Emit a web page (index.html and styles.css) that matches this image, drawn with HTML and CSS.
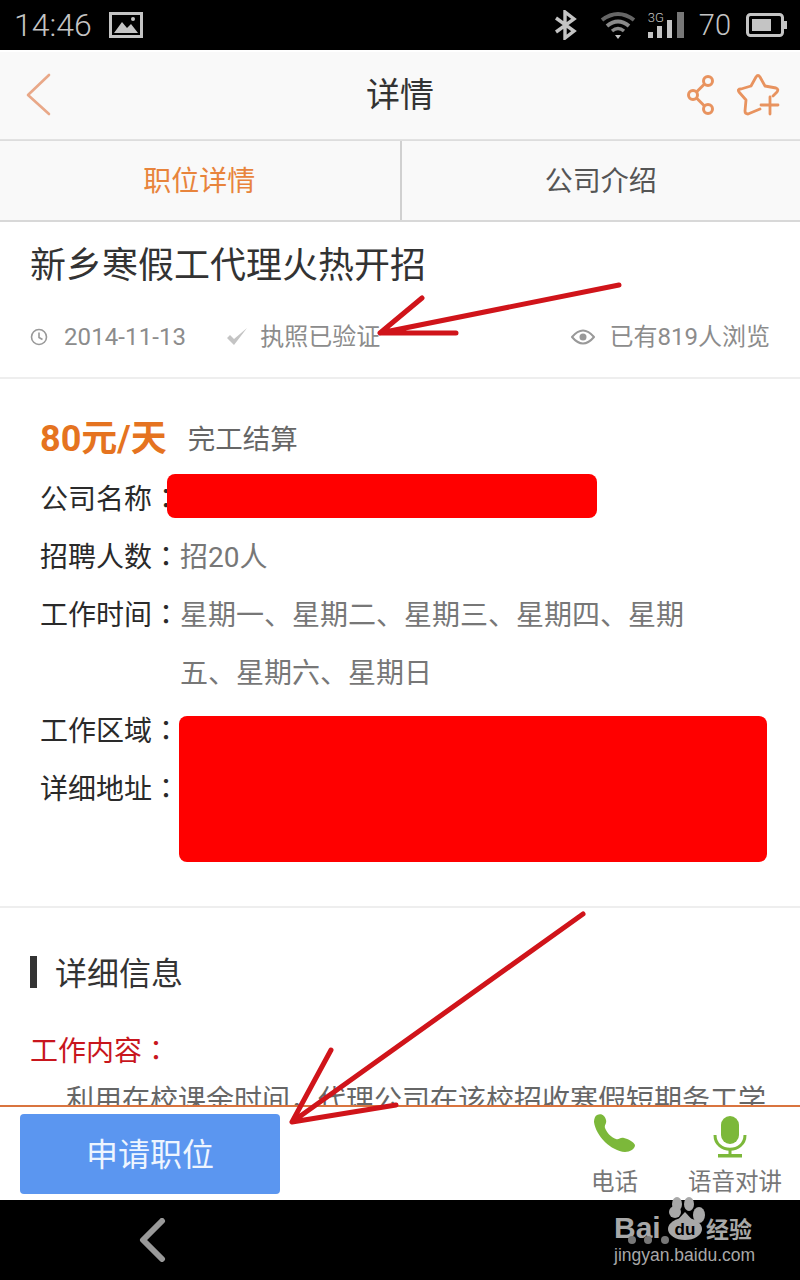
FILE: index.html
```html
<!DOCTYPE html>
<html lang="zh-CN">
<head>
    <meta charset="UTF-8">
    <title>详情</title>
    <link rel="stylesheet" href="styles.css">
</head>
<body>
    <div class="phone">
        <!-- Status bar -->
        <div class="status">
            <div class="status-left">
                <span class="clock">14:46</span>
                <svg width="34" height="26" viewBox="0 0 34 26">
                    <rect x="1.5" y="1.5" width="31" height="23" fill="none" stroke="#c4c4c4" stroke-width="3"/>
                    <path d="M5 21 L13 10 L18 16 L22 12 L29 21 Z" fill="#c4c4c4"/>
                    <circle cx="24" cy="7" r="2" fill="#c4c4c4"/>
                </svg>
            </div>
            <div class="status-right">
                <svg class="st-bt" width="23" height="30" viewBox="0 0 23 30">
                    <path d="M2 8 L20 21 L11 28 L11 2 L20 9 L2 22" fill="none" stroke="#c4c4c4" stroke-width="3.4"/>
                </svg>
                <svg class="st-wifi" width="36" height="28" viewBox="0 0 36 28">
                    <path d="M2 9 Q18 -3 34 9" fill="none" stroke="#666" stroke-width="4"/>
                    <path d="M7 15 Q18 6 29 15" fill="none" stroke="#8a8a8a" stroke-width="4"/>
                    <path d="M12 20 Q18 15 24 20" fill="none" stroke="#8a8a8a" stroke-width="3.5"/>
                    <path d="M15 24 L21 24 L18 28 Z" fill="#c4c4c4"/>
                </svg>
                <div class="st-signal">
                    <span class="st-3g">3G</span>
                    <svg width="38" height="26" viewBox="0 0 38 26">
                        <rect x="0" y="20" width="5" height="6" fill="#c4c4c4"/>
                        <rect x="9" y="14" width="5" height="12" fill="#c4c4c4"/>
                        <rect x="19" y="8" width="5" height="18" fill="#c4c4c4"/>
                        <rect x="29" y="0" width="7" height="26" fill="#777"/>
                    </svg>
                </div>
                <span class="st-level">70</span>
                <svg width="41" height="24" viewBox="0 0 41 24">
                    <rect x="1.5" y="1.5" width="35" height="21" rx="3" fill="none" stroke="#c4c4c4" stroke-width="3"/>
                    <rect x="6" y="6" width="19" height="12" fill="#c4c4c4"/>
                    <rect x="38" y="8" width="3" height="8" fill="#c4c4c4"/>
                </svg>
            </div>
        </div>

        <!-- Title bar -->
        <div class="topbar">
            <svg class="back" width="26" height="44" viewBox="0 0 26 44">
                <path d="M23 2 L2 22 L23 41" fill="none" stroke="#e9a888" stroke-width="2.6" stroke-linecap="round" stroke-linejoin="round"/>
            </svg>
            <div class="topbar-title">详情</div>
            <div class="topbar-actions">
                <svg width="28" height="42" viewBox="0 0 28 42">
                    <g fill="none" stroke="#e8935f" stroke-width="3">
                        <circle cx="21" cy="7" r="4.5"/>
                        <circle cx="6" cy="21" r="4.5"/>
                        <circle cx="21" cy="35" r="4.5"/>
                        <path d="M17.5 10 L9.5 18 M9.5 24 L17.5 32"/>
                    </g>
                </svg>
                <svg width="44" height="42" viewBox="0 0 44 42">
                    <g fill="none" stroke="#e8935f" stroke-width="2.8" stroke-linecap="round" stroke-linejoin="round">
                        <path d="M23 35 L11 40 Q8 40 8 37 L9 26 L2 18 Q0 15 4 15 L14 12 L19 3 Q21 0 23 3 L28 12 L39 14 Q42 15 40 18 L36 22"/>
                        <path d="M33 23 L33 40 M24 31 L41 31"/>
                    </g>
                </svg>
            </div>
        </div>

        <!-- Tabs -->
        <div class="tabs">
            <div class="tab tab-active">职位详情</div>
            <div class="tab">公司介绍</div>
        </div>

        <div class="content">
            <div class="job-head">
                <h1 class="job-title">新乡寒假工代理火热开招</h1>
                <div class="meta">
                    <div class="meta-left">
                        <span class="meta-item meta-time">
                            <svg width="18" height="18" viewBox="0 0 18 18">
                                <circle cx="9" cy="9" r="7.5" fill="none" stroke="#999" stroke-width="1.6"/>
                                <path d="M9 4.5 L9 9.5 L12.5 11.5" fill="none" stroke="#999" stroke-width="1.6"/>
                            </svg>
                            <span class="meta-date">2014-11-13</span>
                        </span>
                        <span class="meta-item">
                            <svg width="22" height="20" viewBox="0 0 22 20">
                                <path d="M1 11 L8 18 L21 1 L8 12 L4 8 Z" fill="#c4c4c4"/>
                            </svg>
                            <span>执照已验证</span>
                        </span>
                    </div>
                    <span class="meta-item meta-views">
                        <svg width="24" height="16" viewBox="0 0 24 16">
                            <path d="M1 8 Q12 -5 23 8 Q12 21 1 8 Z" fill="none" stroke="#999" stroke-width="2"/>
                            <circle cx="12" cy="8" r="3.5" fill="#999"/>
                        </svg>
                        <span>已有819人浏览</span>
                    </span>
                </div>
            </div>

            <div class="job-info">
                <div class="pay">
                    <span class="pay-amount">80元/天</span>
                    <span class="pay-type">完工结算</span>
                </div>
                <div class="row"><span class="row-label">公司名称<span class="colon" lang="zh-TW">：</span></span><span class="row-value"></span></div>
                <div class="row"><span class="row-label">招聘人数<span class="colon" lang="zh-TW">：</span></span><span class="row-value">招20人</span></div>
                <div class="row"><span class="row-label">工作时间<span class="colon" lang="zh-TW">：</span></span><span class="row-value">星期一、星期二、星期三、星期四、星期五、星期六、星期日</span></div>
                <div class="row"><span class="row-label">工作区域<span class="colon" lang="zh-TW">：</span></span><span class="row-value"></span></div>
                <div class="row"><span class="row-label">详细地址<span class="colon" lang="zh-TW">：</span></span><span class="row-value"></span></div>
            </div>

            <div class="details">
                <h2 class="details-title">详细信息</h2>
                <div class="details-sub">工作内容<span class="colon" lang="zh-TW">：</span></div>
                <p class="details-text">利用在校课余时间，代理公司在该校招收寒假短期务工学</p>
            </div>
        </div>

        <!-- Bottom action bar -->
        <div class="actions">
            <button class="apply">申请职位</button>
            <div class="tools">
                <div class="tool tool-phone">
                    <svg width="44" height="38" viewBox="0 0 44 38">
                        <path d="M4 1 C9 -1 12 2 13 6 C14 10 11 11 12 14 C14 19 18 23 23 25 C26 26 27 23 31 24 C35 25 41 28 42 31 C42 35 37 38 32 38 C18 37 3 22 1 8 C1 5 2 2 4 1 Z" fill="#7cb83a"/>
                    </svg>
                    <span>电话</span>
                </div>
                <div class="tool tool-voice">
                    <svg width="34" height="42" viewBox="0 0 34 42">
                        <rect x="8" y="0" width="18" height="28" rx="9" fill="#7cb83a"/>
                        <path d="M2 19 C2 38 32 38 32 19" fill="none" stroke="#7cb83a" stroke-width="3"/>
                        <path d="M17 33 L17 39" stroke="#7cb83a" stroke-width="3"/>
                        <rect x="5" y="38" width="24" height="3.5" fill="#7cb83a"/>
                    </svg>
                    <span>语音对讲</span>
                </div>
            </div>
        </div>

        <!-- Navigation bar -->
        <div class="navbar">
            <svg class="nav-back" width="28" height="44" viewBox="0 0 28 44">
                <path d="M24 3 L5 22 L24 41" fill="none" stroke="#999" stroke-width="6" stroke-linecap="round" stroke-linejoin="round"/>
            </svg>
        </div>

        <!-- Things painted over the screenshot -->
        <div class="redact redact-name"></div>
        <div class="redact redact-area"></div>
        <svg class="scribble" width="800" height="1280" viewBox="0 0 800 1280">
            <g fill="none" stroke="#d0141a" stroke-width="5" stroke-linecap="round" stroke-linejoin="round">
                <path d="M619 285 L380 333 L456 333 M380 333 L422 298"/>
                <path d="M583 914 L292 1122 L396 1105 M292 1122 L331 1050"/>
            </g>
        </svg>
        <div class="watermark">
            <div class="wm-logo">
                <span class="wm-bai">Bai</span>
                <svg class="wm-paw" width="44" height="46" viewBox="0 0 44 46">
                    <g fill="#777">
                        <circle cx="-30" cy="44" r="4"/>
                        <circle cx="-14" cy="44" r="4"/>
                        <circle cx="3" cy="44" r="4"/>
                    </g>
                    <g fill="#a8a8a8">
                        <ellipse cx="15" cy="8" rx="5" ry="7"/>
                        <ellipse cx="27" cy="8" rx="5" ry="7"/>
                        <ellipse cx="13" cy="16" rx="6" ry="6"/>
                        <ellipse cx="37" cy="19" rx="6" ry="8"/>
                        <ellipse cx="23" cy="33" rx="17" ry="11"/>
                        <path d="M23 16 L36 30 L10 30 Z"/>
                    </g>
                    <text x="23" y="39" text-anchor="middle" class="wm-du">du</text>
                </svg>
                <span class="wm-jy">经验</span>
            </div>
            <div class="wm-url">jingyan.baidu.com</div>
        </div>
    </div>
</body>
</html>
```

FILE: styles.css
```css
/* General */
* {
    box-sizing: border-box;
}

body {
    margin: 0;
    background-color: #fff;
    font-family: Roboto, "Noto Sans CJK SC", sans-serif;
    color: #333;
}

.phone {
    position: relative;
    display: flex;
    flex-direction: column;
    width: 800px;
    height: 1280px;
    overflow: hidden;
}

/* Centred full-width colon */
.colon {
    font-family: "Noto Sans CJK TC", sans-serif;
    line-height: 0;
}

/* Status bar */
.status {
    display: flex;
    justify-content: space-between;
    align-items: center;
    height: 50px;
    flex: none;
    padding: 0 13px 0 14px;
    background-color: #000;
    color: #c4c4c4;
    font-weight: 300;
}

.status-left,
.status-right {
    display: flex;
    align-items: center;
}

.clock {
    font-size: 32px;
    line-height: 50px;
    margin-right: 17px;
}

.st-bt {
    margin-right: 23px;
}

.st-wifi {
    margin-right: 12px;
}

.st-signal {
    position: relative;
    margin-right: 13px;
}

.st-signal svg {
    display: block;
}

.st-3g {
    position: absolute;
    left: 0;
    top: -1px;
    font-size: 13px;
    line-height: 14px;
}

.st-level {
    font-size: 29px;
    margin-right: 15px;
}

/* Title bar */
.topbar {
    display: grid;
    grid-template-columns: 1fr auto 1fr;
    align-items: center;
    height: 90px;
    flex: none;
    padding: 0 19px 2px 26px;
    background-color: #f9f9f9;
    border-top: 2px solid #fff;
    border-bottom: 1px solid #e2e2e2;
}

.topbar-title {
    font-size: 34px;
    line-height: 48px;
    margin-left: -7px;
    color: #333;
}

.topbar-actions {
    display: flex;
    justify-content: flex-end;
    gap: 22px;
}

/* Tabs */
.tabs {
    display: flex;
    height: 82px;
    flex: none;
    background-color: #f9f9f9;
    border-top: 1px solid #ddd;
    border-bottom: 2px solid #d8d8d8;
}

.tab {
    display: flex;
    flex: 1;
    align-items: center;
    justify-content: center;
    padding-bottom: 4px;
    font-size: 28px;
    color: #555;
}

.tab + .tab {
    border-left: 2px solid #d0d0d0;
    margin-left: 1px;
}

.tab-active {
    color: #e8843c;
}

/* Page content */
.content {
    flex: 1;
    overflow: hidden;
    background-color: #fff;
}

.job-head {
    height: 157px;
    padding: 0 30px;
    border-bottom: 2px solid #eee;
}

.job-title {
    margin: 0;
    padding-top: 18px;
    font-size: 36px;
    font-weight: 400;
    line-height: 52px;
    color: #333;
}

.meta {
    display: flex;
    justify-content: space-between;
    align-items: center;
    margin-top: 25px;
    font-size: 24px;
    line-height: 40px;
    color: #8c8c8c;
}

.meta-left {
    display: flex;
    gap: 40px;
}

.meta-item {
    display: flex;
    align-items: center;
    gap: 12px;
}

.meta-time {
    gap: 16px;
}

.meta-date {
    letter-spacing: 0.1px;
}

.meta-views {
    gap: 15px;
}

.job-info {
    height: 529px;
    padding: 27px 40px 0;
    border-bottom: 2px solid #eee;
}

.pay {
    display: flex;
    align-items: center;
    height: 65px;
    padding-bottom: 3px;
    gap: 21px;
}

.pay-amount {
    padding-bottom: 4px;
    font-size: 36px;
    font-weight: 700;
    color: #e57320;
}

.pay-type {
    font-size: 27.5px;
    color: #666;
}

.row {
    display: flex;
    font-size: 28px;
    line-height: 58px;
}

.row-label {
    width: 140px;
    flex: none;
    white-space: nowrap;
    color: #2a2a2a;
}

.row-value {
    width: 510px;
    min-height: 58px;
    color: #777;
}

.details {
    padding: 48px 30px 0;
}

.details-title {
    margin: 0;
    padding: 4px 0 0 18px;
    border-left: 7px solid #333;
    font-size: 32px;
    font-weight: 400;
    line-height: 28px;
    color: #333;
}

.details-sub {
    margin-top: 42px;
    font-size: 28px;
    line-height: 44px;
    color: #c8161d;
}

.details-text {
    margin: 5px 0 0;
    font-size: 28px;
    line-height: 44px;
    text-indent: 36px;
    white-space: nowrap;
    color: #666;
}

/* Bottom action bar */
.actions {
    display: flex;
    justify-content: space-between;
    align-items: flex-start;
    height: 95px;
    flex: none;
    padding: 7px 18px 0 20px;
    background-color: #fff;
    border-top: 2px solid #d9743f;
}

.apply {
    width: 260px;
    height: 80px;
    padding: 0 0 4px;
    border: none;
    border-radius: 4px;
    background-color: #5b96f0;
    font-family: inherit;
    font-size: 32px;
    color: #eef5ff;
}

.tools {
    display: flex;
    gap: 50px;
    font-size: 23.5px;
    color: #777;
}

.tool {
    display: flex;
    flex-direction: column;
    align-items: center;
    height: 86px;
}

.tool span {
    line-height: 32px;
}

.tool-phone svg {
    margin-bottom: 14px;
}

.tool-voice svg {
    margin: 2px 10px 8px 0;
}

/* Navigation bar */
.navbar {
    display: flex;
    align-items: center;
    height: 80px;
    flex: none;
    padding-left: 138px;
    background-color: #000;
}

/* Overlays */
.redact {
    position: absolute;
    background-color: #f00;
    border-radius: 8px;
}

.redact-name {
    left: 167px;
    top: 474px;
    width: 430px;
    height: 44px;
}

.redact-area {
    left: 179px;
    top: 716px;
    width: 588px;
    height: 146px;
}

.scribble {
    position: absolute;
    left: 0;
    top: 0;
    pointer-events: none;
}

.watermark {
    position: absolute;
    left: 614px;
    top: 1196px;
    width: 142px;
    color: #a8a8a8;
}

.wm-logo {
    display: flex;
    align-items: flex-start;
    height: 48px;
}

.wm-bai {
    width: 48px;
    flex: none;
    padding-top: 15px;
    font-family: "Liberation Sans", sans-serif;
    font-size: 30px;
    font-weight: 700;
    line-height: 34px;
}

.wm-paw {
    flex: none;
    overflow: visible;
}

.wm-du {
    font-family: "Liberation Sans", sans-serif;
    font-size: 17px;
    font-weight: 700;
    fill: #000;
}

.wm-jy {
    flex: none;
    padding-top: 15px;
    font-family: "Noto Sans CJK SC", sans-serif;
    font-size: 23px;
    font-weight: 700;
    line-height: 34px;
}

.wm-url {
    font-family: "Liberation Sans", sans-serif;
    font-size: 17.5px;
    line-height: 22px;
    white-space: nowrap;
}
```
